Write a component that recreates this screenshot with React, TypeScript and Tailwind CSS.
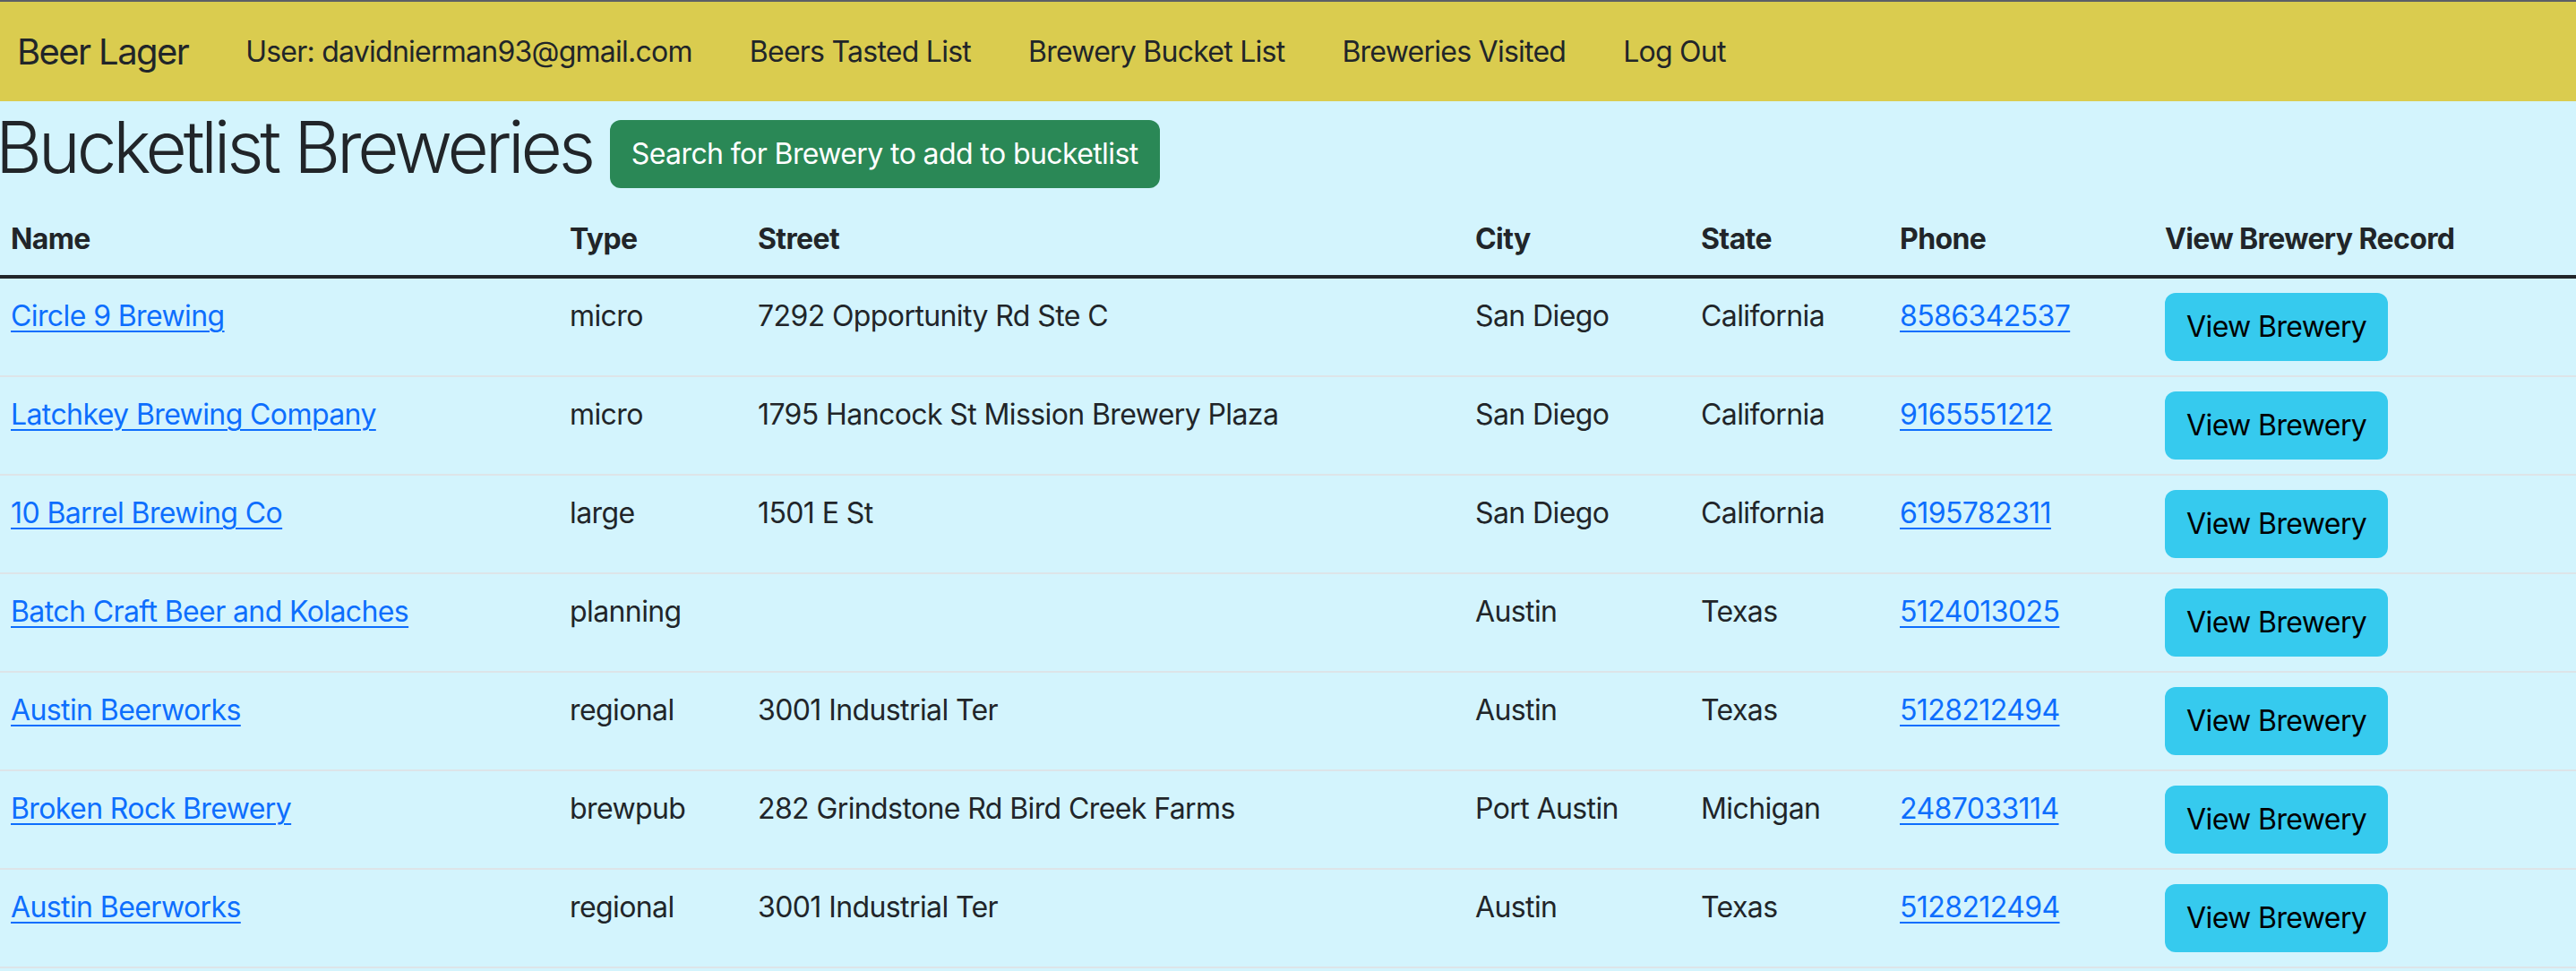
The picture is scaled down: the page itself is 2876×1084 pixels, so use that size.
const breweries = [
  { name: "Circle 9 Brewing", type: "micro", street: "7292 Opportunity Rd Ste C", city: "San Diego", state: "California", phone: "8586342537" },
  { name: "Latchkey Brewing Company", type: "micro", street: "1795 Hancock St Mission Brewery Plaza", city: "San Diego", state: "California", phone: "9165551212" },
  { name: "10 Barrel Brewing Co", type: "large", street: "1501 E St", city: "San Diego", state: "California", phone: "6195782311" },
  { name: "Batch Craft Beer and Kolaches", type: "planning", street: "", city: "Austin", state: "Texas", phone: "5124013025" },
  { name: "Austin Beerworks", type: "regional", street: "3001 Industrial Ter", city: "Austin", state: "Texas", phone: "5128212494" },
  { name: "Broken Rock Brewery", type: "brewpub", street: "282 Grindstone Rd Bird Creek Farms", city: "Port Austin", state: "Michigan", phone: "2487033114" },
  { name: "Austin Beerworks", type: "regional", street: "3001 Industrial Ter", city: "Austin", state: "Texas", phone: "5128212494" },
];

const navLinks = [
  "User: davidnierman93@gmail.com",
  "Beers Tasted List",
  "Brewery Bucket List",
  "Breweries Visited",
  "Log Out",
];

export default function App() {
  return (
    <div
      className="min-h-screen bg-[#d3f4fd] text-[#212529]"
      style={{ fontFamily: "Inter, 'Noto Sans', sans-serif" }}
    >
      {/* Navbar */}
      <nav className="flex items-center h-[113px] bg-[#dacc4f] border-t-2 border-[#5c5f66] pl-[19px]">
        <a className="text-[40px] leading-[60px] mr-[32px] tracking-[-1.6px]">Beer Lager</a>
        <div className="flex items-center">
          {navLinks.map((l) => (
            <a key={l} className="px-[32px] text-[32px] leading-[48px] tracking-[-0.75px]">
              {l}
            </a>
          ))}
        </div>
      </nav>

      {/* Heading */}
      <div className="flex items-start">
        <h1 className="pt-[3px] text-[80px] leading-[96px] font-light -ml-[5px] mr-[20px] tracking-[-4.2px]">
          Bucketlist Breweries
        </h1>
        <button className="mt-[21px] h-[76px] px-[24px] rounded-[12px] bg-[#2a8856] text-white text-[32px] tracking-[-0.6px]">
          Search for Brewery to add to bucketlist
        </button>
      </div>

      {/* Table */}
      <table className="w-full table-fixed mt-[15px] text-[32px] leading-[48px] tracking-[-0.6px] border-collapse">
        <colgroup>
          <col className="w-[624px]" />
          <col className="w-[210px]" />
          <col className="w-[801px]" />
          <col className="w-[252px]" />
          <col className="w-[222px]" />
          <col className="w-[296px]" />
          <col />
        </colgroup>
        <thead>
          <tr className="border-b-4 border-[#212529] text-left">
            {["Name", "Type", "Street", "City", "State", "Phone", "View Brewery Record"].map((h) => (
              <th key={h} className="font-bold px-[12px] py-[16px] align-top">
                {h}
              </th>
            ))}
          </tr>
        </thead>
        <tbody>
          {breweries.map((b, i) => (
            <tr key={i} className="border-b-2 border-[#dde4e8] align-top">
              <td className="px-[12px] pt-[18px] pb-[14px]">
                <a className="text-[#0d6efd] underline decoration-2 underline-offset-[5px]">{b.name}</a>
              </td>
              <td className="px-[12px] pt-[18px] pb-[14px]">{b.type}</td>
              <td className="px-[12px] pt-[18px] pb-[14px]">{b.street}</td>
              <td className="px-[12px] pt-[18px] pb-[14px]">{b.city}</td>
              <td className="px-[12px] pt-[18px] pb-[14px]">{b.state}</td>
              <td className="px-[12px] pt-[18px] pb-[14px]">
                <a className="text-[#0d6efd] underline decoration-2 underline-offset-[5px]">{b.phone}</a>
              </td>
              <td className="px-[12px] py-[16px]">
                <button className="h-[76px] px-[24px] rounded-[12px] bg-[#36caee] text-black text-[32px] tracking-[-0.6px]">
                  View Brewery
                </button>
              </td>
            </tr>
          ))}
        </tbody>
      </table>
    </div>
  );
}
